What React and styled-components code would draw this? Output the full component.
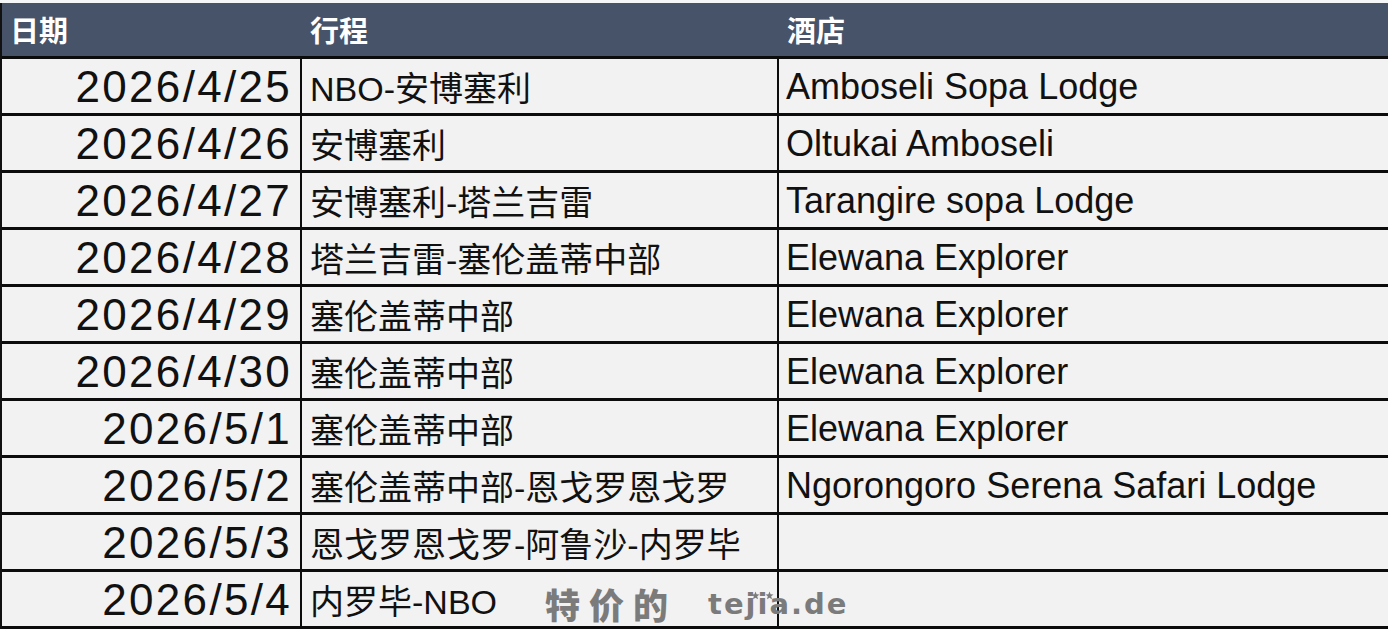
import React from 'react'
import styled, { createGlobalStyle } from 'styled-components'

const GlobalStyle = createGlobalStyle`
  html, body {
    margin: 0;
    padding: 0;
    background: #f4f6f8;
  }
  body {
    font-family: "Liberation Sans", "Noto Sans CJK SC", sans-serif;
    overflow: hidden;
  }
`

const rows = [
  { date: '2026/4/25', route: 'NBO-安博塞利', hotel: 'Amboseli Sopa Lodge' },
  { date: '2026/4/26', route: '安博塞利', hotel: 'Oltukai Amboseli' },
  { date: '2026/4/27', route: '安博塞利-塔兰吉雷', hotel: 'Tarangire sopa Lodge' },
  { date: '2026/4/28', route: '塔兰吉雷-塞伦盖蒂中部', hotel: 'Elewana Explorer' },
  { date: '2026/4/29', route: '塞伦盖蒂中部', hotel: 'Elewana Explorer' },
  { date: '2026/4/30', route: '塞伦盖蒂中部', hotel: 'Elewana Explorer' },
  { date: '2026/5/1', route: '塞伦盖蒂中部', hotel: 'Elewana Explorer' },
  { date: '2026/5/2', route: '塞伦盖蒂中部-恩戈罗恩戈罗', hotel: 'Ngorongoro Serena Safari Lodge' },
  { date: '2026/5/3', route: '恩戈罗恩戈罗-阿鲁沙-内罗毕', hotel: '' },
  { date: '2026/5/4', route: '内罗毕-NBO', hotel: '' },
]

const Star = ({ x }) => (
  <StarMark style={{ left: x }} viewBox="0 0 10 10">
    <path d="M5 0.5 L6.2 3.6 L9.5 3.8 L6.9 5.9 L7.8 9.3 L5 7.4 L2.2 9.3 L3.1 5.9 L0.5 3.8 L3.8 3.6 Z" fill="#7b7b7b" />
  </StarMark>
)

export default function App() {
  return (
    <>
      <GlobalStyle />
      <Page>
        <Table>
          <HeaderRow>
            <HeadCell>日期</HeadCell>
            <HeadCell>行程</HeadCell>
            <HeadCell>酒店</HeadCell>
          </HeaderRow>
          {rows.map(row => (
            <Row key={row.date}>
              <DateCell>{row.date}</DateCell>
              <RouteCell>{row.route}</RouteCell>
              <HotelCell>{row.hotel}</HotelCell>
            </Row>
          ))}
        </Table>
        <Watermark>
          <WaterCn>特价的</WaterCn>
          <WaterEn>
            tejia.de
            <Star x={43} />
            <Star x={57} />
          </WaterEn>
        </Watermark>
      </Page>
    </>
  )
}

const Page = styled.div`
  position: relative;
  width: 1388px;
  height: 629px;
  padding-top: 3px;
  box-sizing: border-box;
`

const Table = styled.div`
  display: grid;
  grid-template-columns: 300px 477px 611px;
  border-left: 2px solid #111;
  box-sizing: border-box;
`

const HeaderRow = styled.div`
  display: contents;
`

const HeadCell = styled.div`
  height: 56px;
  box-sizing: border-box;
  background: #475369;
  border-bottom: 3px solid #0c0c0c;
  color: #ffffff;
  font-family: "Noto Sans CJK SC", sans-serif;
  font-weight: 700;
  font-size: 29px;
  display: flex;
  align-items: center;
  padding-left: 8px;
  padding-bottom: 2px;
`

const Row = styled.div`
  display: contents;
`

const Cell = styled.div`
  height: 57px;
  box-sizing: border-box;
  background: #f2f2f2;
  border-bottom: 3px solid #0c0c0c;
  border-right: 2px solid #0c0c0c;
  display: flex;
  align-items: center;
  color: #111;
  white-space: nowrap;
  overflow: hidden;
`

const DateCell = styled(Cell)`
  justify-content: flex-end;
  padding-right: 8px;
  font-family: "Liberation Sans", sans-serif;
  font-size: 44px;
  letter-spacing: 2.3px;
  padding-top: 2px;
`

const RouteCell = styled(Cell)`
  padding-left: 8px;
  font-family: "Liberation Sans", "Noto Sans CJK SC", sans-serif;
  font-size: 34px;
`

const HotelCell = styled(Cell)`
  padding-left: 7px;
  font-family: "Liberation Sans", sans-serif;
  font-size: 36px;
  padding-top: 2px;
`

const Watermark = styled.div`
  position: absolute;
  left: 545px;
  top: 578px;
  display: flex;
  align-items: center;
  gap: 31px;
  color: #7b7b7b;
  pointer-events: none;
`

const WaterCn = styled.span`
  font-family: "Noto Sans CJK SC", sans-serif;
  font-weight: 900;
  font-size: 35px;
  letter-spacing: 9px;
`

const WaterEn = styled.span`
  position: relative;
  font-family: "DejaVu Sans", sans-serif;
  font-weight: 700;
  font-size: 29px;
  letter-spacing: 2px;
`

const StarMark = styled.svg`
  position: absolute;
  top: 4px;
  width: 9px;
  height: 9px;
`
